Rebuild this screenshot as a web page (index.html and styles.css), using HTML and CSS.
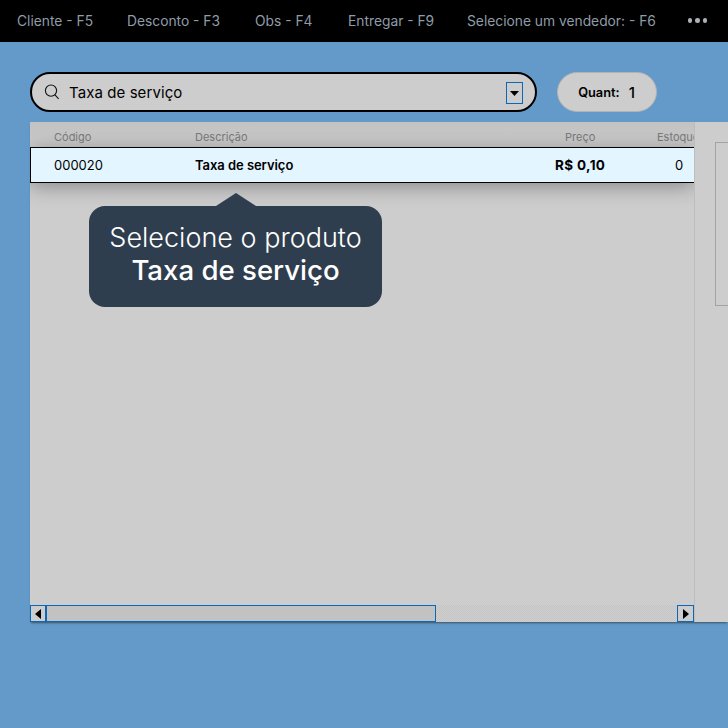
FILE: index.html
```html
<!DOCTYPE html>
<html lang="pt-BR">
<head>
<meta charset="utf-8">
<title>Taxa de serviço</title>
<link rel="stylesheet" href="styles.css">
</head>
<body>
<nav class="topbar">
  <span class="nav-item">Cliente - F5</span>
  <span class="nav-item">Desconto - F3</span>
  <span class="nav-item">Obs - F4</span>
  <span class="nav-item">Entregar - F9</span>
  <span class="nav-item">Selecione um vendedor: - F6</span>
  <span class="dots"><i></i><i></i><i></i></span>
</nav>
<section class="search-row">
  <div class="search">
    <svg class="search-icon" width="18" height="18" viewBox="0 0 18 18" fill="none" stroke="#111" stroke-width="1.1"><circle cx="7" cy="7.6" r="5.6"/><path d="M11 11.8 14.6 15.8"/></svg>
    <span class="search-text">Taxa de serviço</span>
    <span class="drop"><svg width="9" height="5" viewBox="0 0 9 5"><path d="M0 0h9L4.5 5z" fill="#000"/></svg></span>
  </div>
  <div class="qty"><span class="qty-label">Quant:</span><span class="qty-value">1</span></div>
</section>
<main class="panel">
  <div class="grid">
    <div class="grid-body">
      <div class="cols head">
        <span class="c-code">Código</span><span class="c-desc">Descrição</span><span class="c-price">Preço</span><span class="c-stock">Estoque</span>
      </div>
      <div class="cols row">
        <span class="c-code">000020</span><span class="c-desc strong">Taxa de serviço</span><span class="c-price strong">R$ 0,10</span><span class="c-stock">0</span>
      </div>
      <div class="tip">
        <div class="tip-line">Selecione o produto</div>
        <div class="tip-line tip-strong">Taxa de serviço</div>
      </div>
    </div>
    <div class="scroll">
      <span class="sbtn sbtn-left"><svg width="6" height="10" viewBox="0 0 6 10"><path d="M6 0v10L0 5z" fill="#000"/></svg></span>
      <span class="thumb"></span>
      <span class="track"></span>
      <span class="sbtn sbtn-right"><svg width="6" height="10" viewBox="0 0 6 10"><path d="M0 0v10l6-5z" fill="#000"/></svg></span>
    </div>
  </div>
  <aside class="side"><div class="side-box"></div></aside>
</main>
</body>
</html>
```
FILE: styles.css
```css
* { box-sizing: border-box; }
html, body { margin: 0; height: 100%; }
body {
  width: 728px; height: 728px; overflow: hidden;
  background: #639aca;
  font-family: Inter, "Liberation Sans", sans-serif;
  color: #000;
}
.topbar {
  height: 42px; background: #000; display: flex; align-items: center;
  padding: 0 0 0 17px; color: #8f9ca8; font-size: 13.8px;
}
.nav-item { white-space: nowrap; }
.nav-item:nth-child(1) { width: 110px; }
.nav-item:nth-child(2) { width: 128px; }
.nav-item:nth-child(3) { width: 93px; }
.nav-item:nth-child(4) { width: 119px; }
.nav-item:nth-child(5) { width: 221px; }
.dots { display: flex; gap: 3px; margin-top: -1px; }
.dots i { width: 4.4px; height: 4.4px; border-radius: 50%; background: #a9b1b9; }
.search-row { display: flex; align-items: center; padding: 30px 0 0 30px; gap: 20px; }
.search {
  width: 507px; height: 40px; border: 2px solid #000; border-radius: 20px;
  background: #cdcdcd; display: flex; align-items: center; padding: 0 12px 0 12px;
}
.search-icon { flex: none; margin-right: 7px; }
.search-text { font-size: 15px; flex: 1; letter-spacing: .08px; padding-top: 1px; }
.drop {
  width: 17px; height: 22px; border: 1px solid #0a68b8; display: flex;
  align-items: center; justify-content: center; margin: 2px 0 0 0;
}
.qty {
  width: 100px; height: 40px; border: 1px solid #b3b3b3; border-radius: 20px;
  background: #cdcdcd; display: flex; align-items: center; justify-content: center; gap: 9px;
  padding-right: 1px;
}
.qty-label { font-size: 12.8px; font-weight: 600; }
.qty-value { font-size: 15px; font-weight: 500; }
.panel {
  margin: 10px 0 0 30px; width: 698px; height: 500px; background: #cdcdcd;
  display: flex; box-shadow: 0 2px 2px -1px #3d4f60; overflow: hidden;
}
.grid { width: 665px; flex: none; display: flex; flex-direction: column; border-right: 1px solid #bdbdbd; }
.grid-body {
  position: relative; flex: 1; min-height: 0; overflow: hidden;
  background: linear-gradient(#c2c2c2 0, #cdcdcd 24px);
}
.cols { display: flex; align-items: center; }
.head { height: 25px; font-size: 11px; color: #7b7b7b; padding-top: 4px; }
.row {
  height: 36px; background: #e3f5ff; border: 1px solid #000; border-right: 0;
  font-size: 13px; box-shadow: 0 3px 20px rgba(0,0,0,.35);
  position: relative; width: 664px;
}
.c-code { width: 165px; padding-left: 24px; flex: none; }
.row .c-code { width: 164px; padding-left: 23px; }
.c-desc { width: 370px; flex: none; }
.c-price { width: 92px; flex: none; }
.c-stock { flex: none; white-space: nowrap; }
.head .c-stock { width: 37px; overflow: hidden; }
.strong { font-weight: 600; }
.row .c-desc { width: 360px; letter-spacing: -.05px; }
.row .c-price { width: 120px; font-size: 13.5px; font-weight: 700; letter-spacing: .35px; }
.tip {
  position: absolute; left: 59px; top: 84px; width: 293px; height: 101px;
  background: #2f3e4e; border-radius: 16px; color: #fff; text-align: center;
  padding-top: 15px; font-size: 27px; line-height: 33px;
}
.tip::before {
  content: ""; position: absolute; left: 127px; top: -13px;
  border-left: 20px solid transparent; border-right: 20px solid transparent;
  border-bottom: 13px solid #2f3e4e;
}
.tip-line { font-weight: 300; white-space: nowrap; }
.tip-strong { font-weight: 500; font-size: 27.6px; line-height: 32px; }
.scroll { height: 17px; display: flex; flex: none; }
.sbtn {
  width: 17px; height: 17px; flex: none; border: 1px solid #0a68b8;
  display: flex; align-items: center; justify-content: center; background: #cdcdcd;
}
.sbtn-left { border-width: 1px 2px 1px 1px; }
.thumb { width: 389px; flex: none; background: #c2c2c2; border: 1px solid #0a68b8; border-left: 0; }
.track {
  flex: 1; background-color: #cdcdcd;
  background-image: repeating-conic-gradient(#c4c4c4 0 25%, #d0d0d0 0 50%);
  background-size: 2px 2px;
}
.side { flex: 1; padding: 20px 0 0 20px; }
.side-box { height: 164px; border: 1px solid #a3a3a3; border-right: 0; }
```
